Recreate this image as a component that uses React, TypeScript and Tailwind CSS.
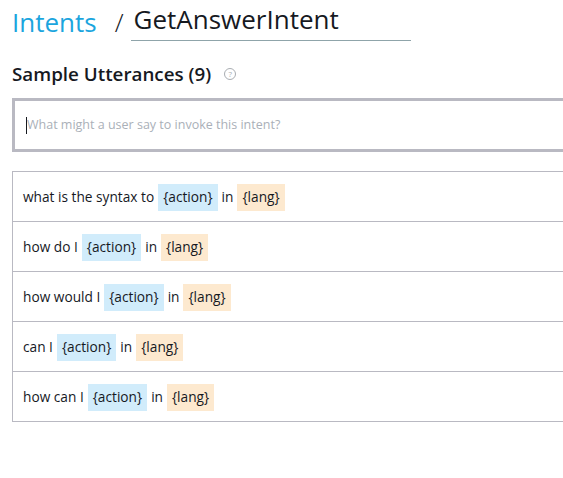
const rows: string[][] = [
  ["what is the syntax to"],
  ["how do I"],
  ["how would I"],
  ["can I"],
  ["how can I"],
];

function Slot({ name, kind }: { name: string; kind: "action" | "lang" }) {
  return (
    <span
      className={
        kind === "action"
          ? "inline-flex items-center h-[27px] px-[5px] bg-[#d1ecfb]"
          : "inline-flex items-center h-[27px] px-[5px] bg-[#fde9cf]"
      }
    >
      {`{${name}}`}
    </span>
  );
}

export default function App() {
  return (
    <div
      className="min-h-[478px] bg-white pl-3 text-[#16191f] overflow-hidden"
      style={{ fontFamily: '"Open Sans", "Noto Sans", sans-serif' }}
    >
      <div className="flex items-end pt-[3px] h-[41px]">
        <span className="text-[26px] text-[#1ba5de] leading-none pb-[6px]">Intents</span>
        <span className="text-[26px] font-light leading-none pb-[6px] ml-[18px] mr-[7px]">/</span>
        <div className="w-[280px] border-b border-[#8fa4aa] pl-[3px] pb-[5px]">
          <span className="text-[26px] leading-none">GetAnswerIntent</span>
        </div>
      </div>

      <div className="flex items-center mt-[22px] h-[22px]">
        <h2 className="text-[18.8px] font-semibold">Sample Utterances (9)</h2>
        <span className="ml-[13px] w-[12px] h-[12px] rounded-full border border-[#a9adb2] text-[#a9adb2] text-[8px] leading-none flex items-center justify-center">
          ?
        </span>
      </div>

      <div className="mt-[13px] h-[54px] border-l-[3px] border-y-[3px] border-[#b9b9c2] flex items-center pl-[11px]">
        <span className="w-px h-[17px] bg-[#16191f]" />
        <span className="text-[12.5px] text-[#aab0b8]">What might a user say to invoke this intent?</span>
      </div>

      <div className="mt-[19px] border-l border-t border-[#b9b9c2]">
        {rows.map((r, i) => (
          <div
            key={i}
            className="h-[50px] border-b border-[#b9b9c2] flex items-center pl-[10px] pt-[1px] text-[13.7px] gap-[4px]"
          >
            <span>{r[0]}</span>
            <Slot name="action" kind="action" />
            <span>in</span>
            <Slot name="lang" kind="lang" />
          </div>
        ))}
      </div>
    </div>
  );
}
